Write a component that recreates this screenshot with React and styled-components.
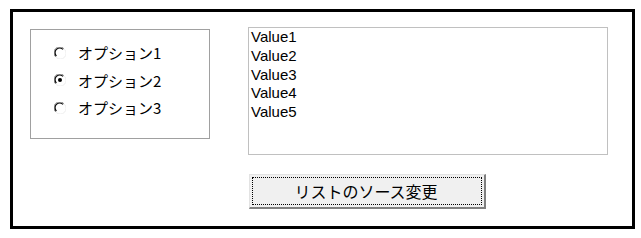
import React, { useState } from "react";
import styled, { createGlobalStyle } from "styled-components";

const GlobalStyle = createGlobalStyle`
  html, body {
    margin: 0;
    padding: 0;
    background: #ffffff;
  }
  body {
    font-family: "Liberation Sans", "Noto Sans CJK JP", sans-serif;
    color: #000000;
  }
`;

const Frame = styled.div`
  box-sizing: border-box;
  margin: 9px 0 0 10px;
  width: 625px;
  height: 220px;
  border: 3px solid #000000;
  display: flex;
  align-items: flex-start;
  padding: 15px 0 0 17px;
  gap: 38px;
`;

const GroupBox = styled.div`
  box-sizing: border-box;
  margin-top: 2px;
  width: 180px;
  height: 110px;
  border: 1px solid #a0a0a0;
  padding: 9px 0 0 23px;
  display: flex;
  flex-direction: column;
`;

const RadioRow = styled.label`
  display: flex;
  align-items: center;
  gap: 12px;
  height: 27.5px;
  font-family: "Noto Sans CJK JP", "Liberation Sans", sans-serif;
  font-size: 15px;
  cursor: default;
`;

const RightCol = styled.div`
  display: flex;
  flex-direction: column;
  align-items: flex-start;
`;

const ListBox = styled.div`
  box-sizing: border-box;
  width: 360px;
  height: 128px;
  border: 1px solid #c0c0c0;
  padding: 0 0 0 2px;
  font-size: 15px;
  line-height: 18.8px;
`;

const ListItem = styled.div`
  white-space: nowrap;
`;

const Button = styled.button`
  box-sizing: border-box;
  margin: 19px 0 0 1px;
  width: 237px;
  height: 35px;
  padding: 2px;
  background: #f0f0f0;
  border-style: solid;
  border-width: 1px 2px 2px 1px;
  border-color: #e3e3e3 #808080 #808080 #e3e3e3;
  display: flex;
  font-family: "Noto Sans CJK JP", "Liberation Sans", sans-serif;
  font-size: 16px;
  color: #000000;
`;

const FocusRing = styled.span`
  flex: 1;
  display: flex;
  align-items: center;
  justify-content: center;
  border: 1px dotted #000000;
  padding-right: 2px;
`;

const RadioIcon = ({ checked }) => (
  <svg width="12" height="12" viewBox="0 0 12 12">
    <circle cx="6" cy="6" r="5.5" fill="#ffffff" />
    <path d="M1.6 9.8 A5.3 5.3 0 0 1 9.8 1.6" fill="none" stroke="#808080" strokeWidth="1" />
    <path d="M2.4 9.0 A4.3 4.3 0 0 1 9.0 2.4" fill="none" stroke="#000000" strokeWidth="1.2" />
    <path d="M10.4 2.2 A5.3 5.3 0 0 1 2.2 10.4" fill="none" stroke="#ececec" strokeWidth="1" />
    {checked && <circle cx="6" cy="6" r="2" fill="#000000" />}
  </svg>
);

const options = ["オプション1", "オプション2", "オプション3"];
const values = ["Value1", "Value2", "Value3", "Value4", "Value5"];

export default function App() {
  const [selected, setSelected] = useState(1);

  return (
    <>
      <GlobalStyle />
      <Frame>
        <GroupBox>
          {options.map((o, i) => (
            <RadioRow key={o} onClick={() => setSelected(i)}>
              <RadioIcon checked={selected === i} />
              <span>{o}</span>
            </RadioRow>
          ))}
        </GroupBox>
        <RightCol>
          <ListBox>
            {values.map((v) => (
              <ListItem key={v}>{v}</ListItem>
            ))}
          </ListBox>
          <Button>
            <FocusRing>リストのソース変更</FocusRing>
          </Button>
        </RightCol>
      </Frame>
    </>
  );
}
